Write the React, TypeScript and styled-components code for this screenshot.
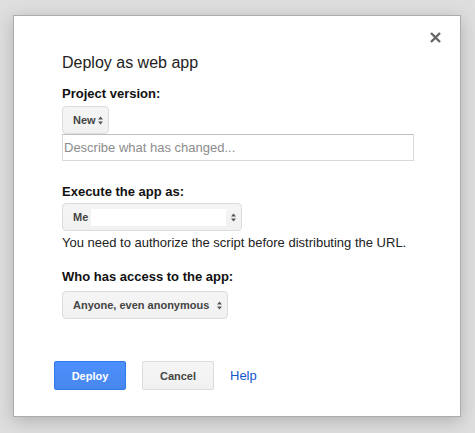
import React from "react";
import styled, { createGlobalStyle } from "styled-components";

const Global = createGlobalStyle`
  html, body { margin: 0; padding: 0; }
  body {
    background: #dedede;
    font-family: "Liberation Sans", Arial, sans-serif;
    width: 475px;
    height: 433px;
    overflow: hidden;
  }
`;

const Page = styled.div`
  padding: 15px 14px 16px 13px;
`;

const Dialog = styled.div`
  position: relative;
  box-sizing: border-box;
  width: 448px;
  height: 402px;
  background: #fff;
  border: 1px solid #acacac;
  box-shadow: 0 4px 16px rgba(0, 0, 0, 0.2);
  display: flex;
  flex-direction: column;
  padding: 37px 0 0 0;
`;

const Close = styled.button`
  position: absolute;
  top: 16px;
  right: 19px;
  width: 11px;
  height: 11px;
  padding: 0;
  border: 0;
  background: none;
  display: flex;
`;

const Body = styled.div`
  display: flex;
  flex-direction: column;
  align-items: flex-start;
  padding-left: 48px;
`;

const Title = styled.div`
  font-size: 16px;
  line-height: 20px;
  color: #222;
`;

const Label = styled.div<{ $top: number }>`
  font-size: 13px;
  line-height: 16px;
  font-weight: bold;
  color: #111;
  margin-top: ${(p) => p.$top}px;
`;

const Note = styled.div`
  font-size: 13px;
  line-height: 16px;
  color: #222;
  margin-top: 4px;
`;

const Select = styled.div<{ $width: number; $top: number }>`
  box-sizing: border-box;
  width: ${(p) => p.$width}px;
  height: 28px;
  margin-top: ${(p) => p.$top}px;
  display: flex;
  align-items: center;
  padding: 0 5px 0 10px;
  background: linear-gradient(#f5f5f5, #f1f1f1);
  border: 1px solid #dcdcdc;
  border-radius: 4px;
  font-size: 11px;
  font-weight: bold;
  color: #444;
`;

const SelectText = styled.span`
  flex: 1;
  white-space: nowrap;
`;

const InlineField = styled.span`
  width: 135px;
  height: 17px;
  background: #fff;
  margin-left: 3px;
  margin-right: auto;
`;

const TextInput = styled.input`
  box-sizing: border-box;
  width: 352px;
  height: 27px;
  margin: 0;
  padding: 0 1px;
  border: 1px solid #d9d9d9;
  border-top-color: #c0c0c0;
  font-family: "Liberation Sans", Arial, sans-serif;
  font-size: 13px;
  color: #222;
  outline: none;
  &::placeholder { color: #8c8c8c; }
`;

const Footer = styled.div`
  display: flex;
  align-items: center;
  gap: 16px;
  margin-top: auto;
  margin-bottom: 26px;
  padding-left: 40px;
`;

const Button = styled.button<{ $primary?: boolean }>`
  box-sizing: border-box;
  width: 72px;
  height: 29px;
  border-radius: 2px;
  font-family: "Liberation Sans", Arial, sans-serif;
  font-size: 11px;
  font-weight: bold;
  padding: 0;
  border: 1px solid ${(p) => (p.$primary ? "#3079ed" : "#dcdcdc")};
  background: ${(p) =>
    p.$primary ? "linear-gradient(#4d90fe, #4787ed)" : "linear-gradient(#f5f5f5, #f1f1f1)"};
  color: ${(p) => (p.$primary ? "#fff" : "#444")};
`;

const HelpLink = styled.a`
  font-size: 13px;
  color: #15c;
  text-decoration: none;
  margin-left: 0;
`;

const Arrows = () => (
  <svg width="5" height="9" viewBox="0 0 5 9" style={{ flexShrink: 0 }}>
    <path d="M2.5 0.5 L5 3.6 L0 3.6 Z" fill="#555" />
    <path d="M0 5.4 L5 5.4 L2.5 8.5 Z" fill="#555" />
  </svg>
);

export default function App() {
  return (
    <>
      <Global />
      <Page>
        <Dialog>
          <Close aria-label="Close">
            <svg width="11" height="11" viewBox="0 0 11 11">
              <path d="M1 1 L10 10 M10 1 L1 10" stroke="#666" strokeWidth="2.4" />
            </svg>
          </Close>
          <Body>
            <Title>Deploy as web app</Title>
            <Label $top={13}>Project version:</Label>
            <Select $width={47} $top={4}>
              <SelectText>New</SelectText>
              <Arrows />
            </Select>
            <TextInput placeholder="Describe what has changed..." />
            <Label $top={23}>Execute the app as:</Label>
            <Select $width={180} $top={3}>
              <span>Me</span>
              <InlineField />
              <Arrows />
            </Select>
            <Note>You need to authorize the script before distributing the URL.</Note>
            <Label $top={18}>Who has access to the app:</Label>
            <Select $width={166} $top={6}>
              <SelectText>Anyone, even anonymous</SelectText>
              <Arrows />
            </Select>
          </Body>
          <Footer>
            <Button $primary>Deploy</Button>
            <Button>Cancel</Button>
            <HelpLink href="#">Help</HelpLink>
          </Footer>
        </Dialog>
      </Page>
    </>
  );
}
